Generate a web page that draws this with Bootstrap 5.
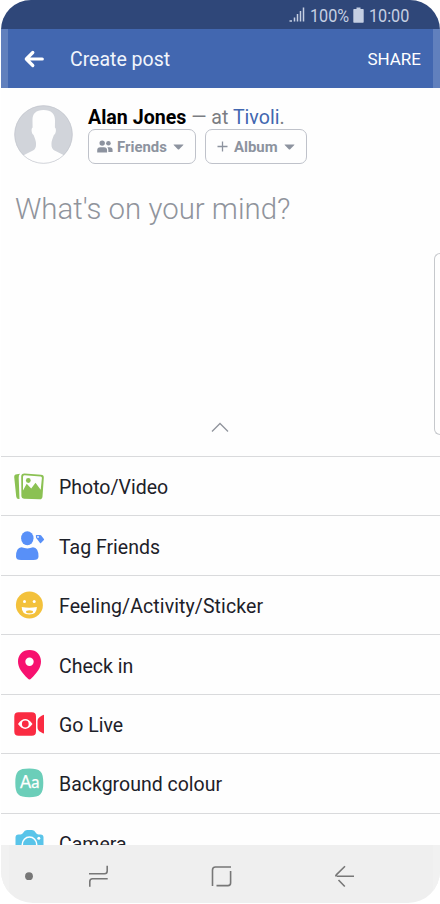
<!DOCTYPE html>
<html lang="en">
<head>
<meta charset="utf-8">
<meta name="viewport" content="width=device-width, initial-scale=1">
<title>Create post</title>
<link href="https://cdn.jsdelivr.net/npm/bootstrap@5.3.0/dist/css/bootstrap.min.css" rel="stylesheet">
<style>
body{font-family:Roboto,"Liberation Sans",sans-serif;background:#fff;color:#1d2129}
.phone{width:440px;height:904px;padding:0 0 1px 1px}
.screen{border-radius:30px 30px 32px 32px;background:#fefefe}
.statusbar{height:29px;background:#2f4779;color:#c5cfe2;padding-right:31px;font-size:18.4px;line-height:29px}
.statusbar span{display:block;transform:scaleX(.88);transform-origin:0 50%;padding-top:1px}
.statusbar .pct{margin-left:5px;width:39px}
.statusbar .clock{margin-left:5px;width:40px}
.appbar{height:59px;background:#4267b0;color:#fff;padding:0 19px 0 23px}
.appbar .title{font-size:19.5px;margin-left:26px;color:#f1f5fc;padding-top:3px}
.appbar .share{font-size:17px;padding-top:2px}
.edge{top:0;bottom:0;width:7px;background:rgba(255,255,255,.17)}
.composer{height:368px;padding:17px 14px 0 13px}
.who{font-size:19.6px;line-height:24px;height:24px;padding-top:1px;color:#7b7d82;margin-left:15px}
.who b{color:#000;font-weight:700}
.who .place{color:#4267b0}
.pills{margin-left:15px}
.pill{height:35px;border:1px solid #bfc2ca;border-radius:7px;background:#fefefe;color:#8d939f;font-size:14.9px;font-weight:700;line-height:33px}
.pill svg{flex:none}
#friends{width:108px;margin-right:9px;padding-left:8px}
#friends .pill-text{margin:2px 6px 0 4px}
#album{width:102px;padding-left:11px}
#album .pill-text{margin:2px 6px 0 6px}
.prompt{font-size:29.4px;font-weight:300;line-height:38px;color:#90949c;margin:26px 0 0 1px}
.collapse-arrow{left:210px;top:334px}
.drawer{top:165px;right:0;width:6px;height:182px;border:1px solid #c6c8cc;border-right:0;border-radius:7px 0 0 7px}
.options{min-height:0}
.option{flex:0 0 59.45px;border-top:1px solid #d9dadc;font-size:19.5px;padding-left:11px}
.option svg{flex:none;width:34px;height:34px;margin-right:13px}
.option span{line-height:28px;padding-top:4px}
.option .wide{letter-spacing:.09px}
.navbar-soft{height:58px;background:#efefef}
</style>
</head>
<body>
<div class="phone overflow-hidden">
<main class="screen h-100 d-flex flex-column overflow-hidden">
  <div class="statusbar d-flex align-items-center justify-content-end flex-shrink-0">
    <svg width="16" height="17" viewBox="0 0 16 17" fill="none" stroke="#c5cfe2" stroke-width="1.500"><path d="M.5 15h2.500M5.500 15.500v-4M8.500 15.500V8M11.500 15.500V5M14.500 15.500V1.500"/></svg>
    <span class="pct">100%</span>
    <svg class="ms-1" width="11" height="16" viewBox="0 0 11 16" fill="#c5cfe2"><path d="M3.500.500h4v1.500H10q.7 0 .7.700V15q0 .7-.7.700H1q-.7 0-.7-.7V2.700Q.3 2 1 2h2.500z"/></svg>
    <span class="clock">10:00</span>
  </div>
  <header class="appbar d-flex align-items-center flex-shrink-0 position-relative">
    <svg width="20" height="18" viewBox="0 0 20 18" fill="none" stroke="#fff" stroke-width="3.200" stroke-linecap="round" stroke-linejoin="round"><path d="M8.800 2.500 2.300 9l6.500 6.500M3 9h15.300"/></svg>
    <span class="title">Create post</span>
    <span class="share ms-auto">SHARE</span>
    <i class="edge position-absolute start-0"></i><i class="edge position-absolute end-0"></i>
  </header>
  <section class="composer flex-shrink-0 position-relative">
    <div class="d-flex">
      <svg width="59" height="59" viewBox="0 0 59 59"><defs><clipPath id="face"><circle cx="29.500" cy="29.500" r="29"/></clipPath></defs><circle cx="29.500" cy="29.500" r="29" fill="#d1d4da"/><path clip-path="url(#face)" fill="#fefefe" d="M29.500 5C21.500 5 18.200 9 18.500 16l.1 6.500c-1.800 1-1 6.500 1 7.500 1.400 3.500 2.200 5.500 2.400 8 .2 4-.5 6-3 7.500C15.500 47.500 12.500 48.500 9 50.500L4 60h51l-4.500-9.500c-3.500-2-6.500-3-10-5-2.500-1.500-3.200-3.500-3-7.500.2-2.500 1-4.500 2.400-8 2-1 2.800-6.500 1-7.500L41 16C41.200 9 37.500 5 29.500 5z"/><circle cx="29.500" cy="29.500" r="28.800" fill="none" stroke="#bfc3ca" stroke-opacity=".7" stroke-width=".9"/></svg>
      <div>
        <div class="who text-nowrap"><b>Alan Jones</b> — at <span class="place">Tivoli</span>.</div>
        <div class="pills d-flex">
          <div class="pill d-flex align-items-center" id="friends">
            <svg width="16" height="13" viewBox="0 0 15 12.500" fill="#8d939f"><circle cx="4.800" cy="3" r="2.600"/><circle cx="10.800" cy="3.200" r="2.200"/><path d="M0 12V9.800Q0 7 3 7h3.500q3 0 3 2.800V12zM10.700 11.500V9.600Q10.700 7.800 9.800 6.900h2.200q2.800 0 2.800 2.700v1.900z"/></svg>
            <span class="pill-text">Friends</span>
            <svg width="11" height="6" viewBox="0 0 10 6" preserveAspectRatio="none"><path fill="#8d939f" d="M.8.500h8.400q.6 0 .2.500L5.400 5.400q-.4.400-.8 0L.6 1Q.2.500.8.500z"/></svg>
          </div>
          <div class="pill d-flex align-items-center" id="album">
            <svg width="11" height="11" viewBox="0 0 11 11"><path d="M5.500.500v10M.5 5.500h10" stroke="#8d939f" stroke-width="1.300"/></svg>
            <span class="pill-text">Album</span>
            <svg width="11" height="6" viewBox="0 0 10 6" preserveAspectRatio="none"><path fill="#8d939f" d="M.8.500h8.400q.6 0 .2.500L5.400 5.400q-.4.400-.8 0L.6 1Q.2.500.8.500z"/></svg>
          </div>
        </div>
      </div>
    </div>
    <div class="prompt text-nowrap">What's on your mind?</div>
    <svg class="collapse-arrow position-absolute" width="18" height="11" viewBox="0 0 18 11" fill="none" stroke="#90949c" stroke-width="1.300"><path d="M1 9.500 9 1.500l8 8"/></svg>
    <div class="drawer position-absolute"></div>
  </section>
  <section class="options d-flex flex-column flex-grow-1 overflow-hidden">
    <div class="option d-flex align-items-center">
      <svg viewBox="0 0 34 34" fill="#8bc153"><path d="M3.500 5.500 8 4.800Q6.500 6 6.700 9L7.500 30H6.700Q4.500 30 4.200 27.500L2.200 8Q2 6 3.500 5.500z"/><path fill-rule="evenodd" d="M12.500 4.500 29 5.700q3 .2 2.800 3L30.500 27.500q-.2 3-3 2.800L12 29.800q-2.500-.1-2.600-2.500L9.200 7.500q0-3 3.300-3zm0 1.800Q11 6.200 11 8v13.500l3.700-6.700 4.500 4.700 4.300-5.800 5.200 7L29.900 9q.1-1.300-1.200-1.400z"/><circle cx="16.300" cy="11.500" r="2.400"/></svg>
      <span>Photo/Video</span></div>
    <div class="option d-flex align-items-center">
      <svg viewBox="0 0 34 34" fill="#5890f8"><ellipse cx="15.300" cy="9.200" rx="6.200" ry="7"/><path d="M4 27.500Q4 18.800 9.500 18.300q6 2.200 11.500 0 5.500.5 5.500 9.200 0 3.500-5 3.500H9q-5 0-5-3.500z"/><path fill-rule="evenodd" d="M23.800 6.700q0-.7.700-.7h3.700q.6 0 1 .4l2.700 3.500q.5.600 0 1.100l-2.900 2.900q-.5.500-1 0l-3-3.800q-1.200-1-1.200-3.400zM26 7a.9.900 0 1 0 .01 1.800A.9.900 0 0 0 26 7z"/></svg>
      <span>Tag Friends</span></div>
    <div class="option d-flex align-items-center">
      <svg viewBox="0 0 34 34"><circle cx="17.400" cy="17" r="13.500" fill="#f3c13b"/><circle cx="12.500" cy="13.400" r="1.500" fill="#fff"/><circle cx="22.200" cy="13.400" r="1.500" fill="#fff"/><path fill="#fff" d="M9.700 19q7.600 1.300 15.200 0 0 7.600-7.600 7.600T9.700 19z"/><ellipse cx="17.500" cy="23.800" rx="3.500" ry="1.500" fill="#f3c13b"/></svg>
      <span class="wide">Feeling/Activity/Sticker</span></div>
    <div class="option d-flex align-items-center">
      <svg viewBox="0 0 34 34"><path fill="#f7116f" fill-rule="evenodd" d="M17.500 2C10.500 2 6 6.800 6 13.500c0 6.500 4 11 9.800 17.100q1.700 1.700 3.400 0C25 24.500 29 20 29 13.500 29 6.800 24.500 2 17.500 2zm0 7.500a4.200 4.200 0 1 1 0 8.400 4.200 4.200 0 0 1 0-8.400z"/></svg>
      <span>Check in</span></div>
    <div class="option d-flex align-items-center">
      <svg viewBox="0 0 34 34"><path fill="#fa2b42" d="M6.500 5.300h13.300q4.200 0 4.200 4.200v15q0 4.300-4.200 4.300H6.500q-4.200 0-4.200-4.300v-15q0-4.200 4.200-4.200zM30 8.600l1.200-.7q.8-.4.800.6v17.300q0 1-.8.600l-2.500-1.300q-3.200-1.600-3.200-4.800v-6q0-3.200 3-4.800z"/><path fill="#fff" fill-rule="evenodd" d="M6 17q7.200-10 14.500 0-7.300 9.800-14.500 0zm7.300-3.400a3.400 3.400 0 1 0 .01 6.800 3.400 3.400 0 0 0-.01-6.800z"/></svg>
      <span>Go Live</span></div>
    <div class="option d-flex align-items-center">
      <svg viewBox="0 0 34 34"><path fill="#6bceb9" d="M17.300 2.500c11 0 14 3 14 14.300s-3 14.500-14 14.500-14-3-14-14.500 3-14.300 14-14.300z"/><text x="17.700" y="22.200" text-anchor="middle" font-size="16.500" font-family="Lato,sans-serif" font-weight="400" fill="#fff" stroke="#fff" stroke-width=".25">Aa</text></svg>
      <span>Background colour</span></div>
    <div class="option d-flex align-items-center">
      <svg viewBox="0 0 34 34"><g transform="translate(0 1)"><path fill="#59c4e9" d="M6.500 7.500h2q1.800 0 2.700-1.700Q12.500 3 15 3h5q2.500 0 3.800 2.800.9 1.700 2.700 1.700h2q3 0 3 3V27q0 4-4 4h-20q-4 0-4-4V10.500q0-3 3-3z"/><circle cx="17.500" cy="17.300" r="7.200" fill="none" stroke="#fff" stroke-width="1.500"/><circle cx="26.800" cy="11.200" r="1.500" fill="#fff"/></g></svg>
      <span>Camera</span></div>
  </section>
  <nav class="navbar-soft flex-shrink-0">
    <svg class="d-block" width="439" height="58" viewBox="1 845 439 58" fill="none" stroke="#777" stroke-width="1.600"><path d="M1 845h8v58H1zM433 845h7v58h-7z" fill="#f1f1f1" stroke="none"/><circle cx="29" cy="876.200" r="3.900" fill="#777" stroke="none"/><path d="M89 873.700h15.500q2.700 0 2.700-2.700v-5.300M107.700 878.700H92.500q-2.700 0-2.700 2.700v5.300M212.500 886v-16q0-3 3-3h15.500M230.600 871v12q0 2.600-2.600 2.600h-11.500M354 876.300h-17.500M345 866.300l-8.500 8.300q-1 1-.5 1.700M338.500 880l6.300 6.500"/></svg>
  </nav>
</main>
</div>
</body>
</html>
